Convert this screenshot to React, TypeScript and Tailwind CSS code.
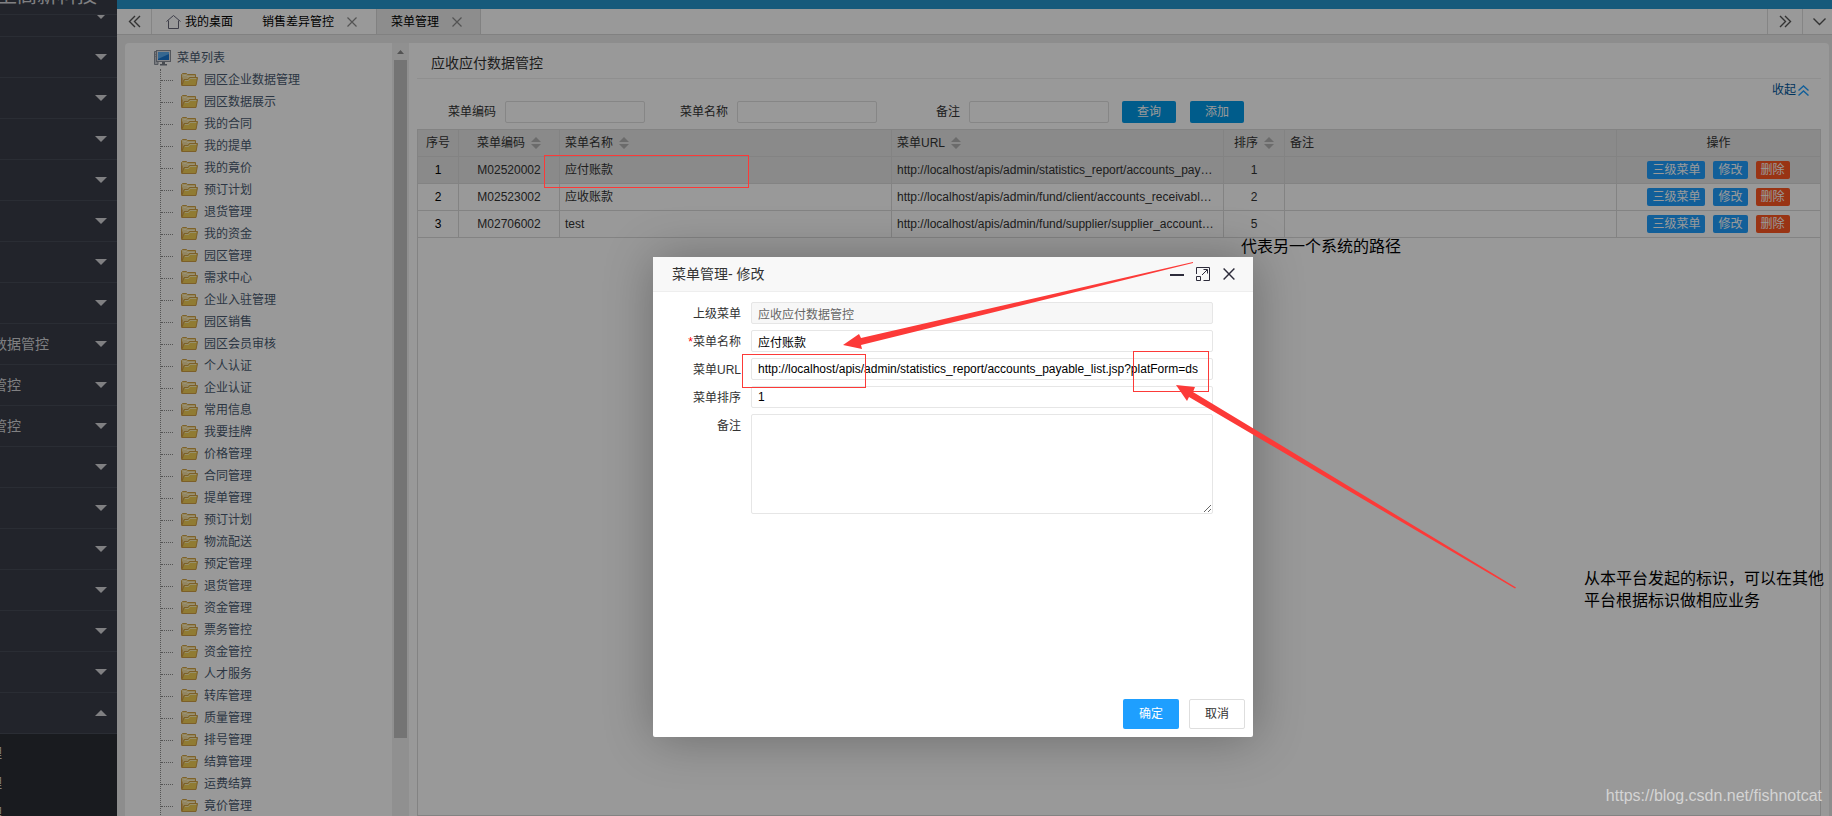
import type { ReactNode } from "react";

const NAV_LABELS = [
  "", "", "", "", "", "", "", "", "数据管控", "管控", "管控",
  "", "", "", "", "", "", "",
];

const TREE = [
  "园区企业数据管理", "园区数据展示", "我的合同", "我的提单", "我的竟价", "预订计划",
  "退货管理", "我的资金", "园区管理", "需求中心", "企业入驻管理", "园区销售",
  "园区会员审核", "个人认证", "企业认证", "常用信息", "我要挂牌", "价格管理",
  "合同管理", "提单管理", "预订计划", "物流配送", "预定管理", "退货管理",
  "资金管理", "票务管控", "资金管控", "人才服务", "转库管理", "质量管理",
  "排号管理", "结算管理", "运费结算", "竟价管理",
];

type Row = { code: string; name: string; url: string; sort: number };

const ROWS: Row[] = [
  { code: "M02520002", name: "应付账款", url: "http://localhost/apis/admin/statistics_report/accounts_payable_list.jsp", sort: 1 },
  { code: "M02523002", name: "应收账款", url: "http://localhost/apis/admin/fund/client/accounts_receivable_list.jsp", sort: 2 },
  { code: "M02706002", name: "test", url: "http://localhost/apis/admin/fund/supplier/supplier_account_list.jsp", sort: 5 },
];

function Caret({ up = false }: { up?: boolean }) {
  return (
    <svg width="12" height="6" viewBox="0 0 12 6" fill="#d5d6d9" className="shrink-0">
      <path d={up ? "M0 6L6 0L12 6Z" : "M0 0H12L6 6Z"} />
    </svg>
  );
}

function CloseIcon({ size, color }: { size: number; color: string }) {
  return (
    <svg width={size} height={size} viewBox="0 0 10 10" fill="none" stroke={color} strokeWidth="1.2">
      <path d="M0.5 0.5L9.5 9.5M9.5 0.5L0.5 9.5" />
    </svg>
  );
}

function Chevrons({ flip = false }: { flip?: boolean }) {
  return (
    <svg width="13" height="13" viewBox="0 0 13 13" fill="none" stroke="#555" strokeWidth="1.4">
      <path d={flip ? "M1 1L6.5 6.5L1 12M6 1L11.5 6.5L6 12" : "M7 1L1.5 6.5L7 12M12 1L6.5 6.5L12 12"} />
    </svg>
  );
}

function FolderIcon() {
  return (
    <svg width="17" height="14" viewBox="0 0 17 14" className="shrink-0">
      <path d="M0.5 12.5V1.5L1.5 0.5H5.5L6.5 1.5H14.5V5" fill="#f6dfa0" stroke="#d3a443" />
      <path d="M2.5 2.5H5L6 3.5H13.5" fill="none" stroke="#fff3c8" />
      <path d="M1 12.5L3 6.5H7L8.5 4.5H16.5L15 12.5Z" fill="#f0cd55" stroke="#cf9f45" />
      <path d="M4 7.5H7.6L9 5.5H15.3" fill="none" stroke="#fbeeb4" />
      <path d="M1 4.5V11" stroke="#c98c35" />
    </svg>
  );
}

function MonitorIcon() {
  return (
    <svg width="17" height="16" viewBox="0 0 17 16" className="shrink-0">
      <path d="M0.5 1.5H4V14.5H0.5Z" fill="#c9ccd2" stroke="#8b919b" />
      <path d="M1.5 4.5H3M1.5 6.5H3" stroke="#7c828c" />
      <rect x="2.5" y="0.5" width="14" height="11" fill="#dfe2e7" stroke="#8a8f99" />
      <rect x="4" y="2" width="11" height="8" fill="#1877d2" />
      <path d="M4 2H15V4L4 9Z" fill="#5aacf0" />
      <path d="M8 12H11V14H13V15.5H6V14H8Z" fill="#777d88" />
    </svg>
  );
}

function SortIcon() {
  return (
    <svg width="10" height="12" viewBox="0 0 10 12" fill="#b2b2b2" className="shrink-0">
      <path d="M0 5L5 0L10 5ZM0 7H10L5 12Z" />
    </svg>
  );
}

function Sidebar() {
  return (
    <aside className="isolate flex w-[117px] shrink-0 flex-col overflow-hidden bg-[#393d49] text-sm text-[#d5d6d9]">
      <div className="relative z-10 flex h-[15px] shrink-0 items-end justify-end border-b border-[#464b58] bg-[#393d49] pr-5">
        <h1 className="mb-1.5 whitespace-nowrap text-xl leading-6">上高新科技</h1>
      </div>
      <nav className="-mt-[19px] shrink-0">
        {NAV_LABELS.map((label, i) => (
          <a key={i} href="#" className="flex h-[41px] items-center justify-end border-b border-[#464b58] pr-2.5">
            <span className="-ml-[7px] flex-1 whitespace-nowrap">{label}</span>
            <Caret up={i === NAV_LABELS.length - 1} />
          </a>
        ))}
      </nav>
      <div className="flex-1 bg-[#2b2d35] pt-1">
        {[0, 1, 2].map((i) => (
          <a key={i} href="#" className="block h-[30px] leading-[30px]">
            <span className="-ml-3">理</span>
          </a>
        ))}
      </div>
    </aside>
  );
}

function TabBar() {
  return (
    <div className="flex h-[26px] shrink-0 border-b border-[#d8d8d8] bg-white text-xs text-black">
      <button aria-label="向左" className="flex w-[35px] items-center justify-center border-r border-[#dedede]">
        <Chevrons />
      </button>
      <button className="flex items-center gap-1 px-3.5">
        <svg width="15" height="14" viewBox="0 0 15 14" fill="none" stroke="#667" strokeWidth="1">
          <path d="M0.5 6.5L7.5 0.5L14.5 6.5M2.5 5.5V13.5H12.5V5.5" />
        </svg>
        我的桌面
      </button>
      <button className="flex items-center gap-[13px] px-[15px]">
        销售差异管控
        <CloseIcon size={10} color="#8a8a8a" />
      </button>
      <button className="ml-1 flex items-center gap-[13px] border-x border-[#d8d8d8] bg-[#ececec] pl-3.5 pr-[18px]">
        菜单管理
        <CloseIcon size={10} color="#8a8a8a" />
      </button>
      <div className="flex-1" />
      <button aria-label="向右" className="flex w-[35px] items-center justify-center border-l border-[#dedede]">
        <Chevrons flip />
      </button>
      <button aria-label="更多" className="flex w-[30px] items-center justify-end border-l border-[#dedede] pr-1.5">
        <svg width="13" height="8" viewBox="0 0 13 8" fill="none" stroke="#555" strokeWidth="1.4">
          <path d="M0.5 0.5L6.5 6.5L12.5 0.5" />
        </svg>
      </button>
    </div>
  );
}

function TreePanel() {
  return (
    <div className="flex w-[284px] shrink-0 rounded-tl-sm bg-white text-xs text-[#4a5b70]">
      <div className="flex-1 overflow-hidden pl-[29px] pt-1">
        <div className="flex h-[22px] items-center gap-1.5">
          <MonitorIcon />
          菜单列表
        </div>
        <ul className="ml-1.5 border-l border-dotted border-[#8c8c8c]">
          {TREE.map((name, i) => (
            <li key={i} className="flex h-[22px] items-center">
              <span className="mr-2 w-3 border-t border-dotted border-[#8c8c8c]" />
              <FolderIcon />
              <span className="ml-1.5">{name}</span>
            </li>
          ))}
        </ul>
      </div>
      <div className="flex w-[17px] flex-col items-center bg-[#f1f1f1]">
        <svg width="17" height="17" viewBox="0 0 17 17" fill="#8a8a8a" className="shrink-0">
          <path d="M5 11L8.5 7L12 11Z" />
        </svg>
        <div className="h-[678px] w-[13px] shrink-0 bg-[#c1c1c1]" />
      </div>
    </div>
  );
}

function SearchField({ id, label, className }: { id: string; label: string; className: string }) {
  return (
    <div className={`flex items-center gap-[9px] ${className}`}>
      <label htmlFor={id}>{label}</label>
      <input id={id} className="h-[22px] w-[140px] rounded-xs border border-[#e0e0e0] bg-white px-1" />
    </div>
  );
}

function Th({ children, sortable = false, center = false }: { children: ReactNode; sortable?: boolean; center?: boolean }) {
  return (
    <th className="border border-[#dadada] px-[5px] font-normal">
      <span className={`flex items-center gap-1.5 ${center ? "justify-center" : ""}`}>
        {children}
        {sortable && <SortIcon />}
      </span>
    </th>
  );
}

function MenuTable() {
  const td = "truncate border border-[#dadada] px-[5px]";
  const btn = "h-[18px] rounded-xs px-[5px] leading-[18px] text-white";
  return (
    <table className="w-full table-fixed border-collapse text-[#333]">
      <colgroup>
        <col className="w-[41px]" />
        <col className="w-[101px]" />
        <col />
        <col />
        <col className="w-[61px]" />
        <col />
        <col className="w-[204px]" />
      </colgroup>
      <thead>
        <tr className="h-[27px] bg-[#e6e6e6]">
          <Th center>序号</Th>
          <Th sortable center>菜单编码</Th>
          <Th sortable>菜单名称</Th>
          <Th sortable>菜单URL</Th>
          <Th sortable center>排序</Th>
          <Th>备注</Th>
          <Th center>操作</Th>
        </tr>
      </thead>
      <tbody>
        {ROWS.map((row, i) => (
          <tr key={row.code} className={`h-[27px] ${i === 0 ? "bg-[#e6e6e6]" : ""}`}>
            <td className={`${td} text-center text-black`}>{i + 1}</td>
            <td className={`${td} text-center`}>{row.code}</td>
            <td className={td}>{row.name}</td>
            <td className={td}>{row.url}</td>
            <td className={`${td} text-center`}>{row.sort}</td>
            <td className={td} />
            <td className={td}>
              <div className="flex justify-center gap-2">
                <button className={`${btn} bg-[#1e9fff]`}>三级菜单</button>
                <button className={`${btn} bg-[#1e9fff]`}>修改</button>
                <button className={`${btn} bg-[#ff5722]`}>删除</button>
              </div>
            </td>
          </tr>
        ))}
      </tbody>
    </table>
  );
}

function ContentPanel() {
  return (
    <div className="flex min-w-0 flex-1 flex-col rounded-tr-sm bg-white px-2 text-xs text-[#333]">
      <h2 className="h-9 shrink-0 border-b border-[#eee] pl-3.5 text-sm leading-10">应收应付数据管控</h2>
      <div className="flex h-[22px] shrink-0 items-center justify-end pr-3">
        <a href="#" className="flex items-center gap-0.5 text-[#01579b]">
          收起
          <svg width="11" height="11" viewBox="0 0 11 11" fill="none" stroke="#1e9fff" strokeWidth="1.4">
            <path d="M0.5 5.5L5.5 1L10.5 5.5M0.5 10.5L5.5 6L10.5 10.5" />
          </svg>
        </a>
      </div>
      <form className="flex h-7 shrink-0 items-start pl-[31px]" onSubmit={(e) => e.preventDefault()}>
        <SearchField id="q-code" label="菜单编码" className="" />
        <SearchField id="q-name" label="菜单名称" className="ml-[35px]" />
        <SearchField id="q-note" label="备注" className="ml-[59px]" />
        <button className="ml-[13px] h-[22px] w-[54px] rounded-xs bg-[#009ae8] text-white">查询</button>
        <button className="ml-3.5 h-[22px] w-[54px] rounded-xs bg-[#009ae8] text-white">添加</button>
      </form>
      <MenuTable />
      <div className="flex-1 border-x border-b border-[#dadada]" />
    </div>
  );
}

function FormRow({ id, label, required = false, children }: { id: string; label: string; required?: boolean; children: ReactNode }) {
  return (
    <div className="flex gap-2.5">
      <label htmlFor={id} className="w-[88px] pt-0.5 text-right leading-5">
        {required && <span className="text-[#f00]">*</span>}
        {label}
      </label>
      {children}
    </div>
  );
}

function EditDialog() {
  const input = "h-[22px] flex-1 rounded-xs border border-[#e6e6e6] px-1.5 text-black";
  return (
    <div
      role="dialog"
      aria-labelledby="dialog-title"
      className="absolute left-[653px] top-[257px] flex h-[480px] w-[600px] flex-col rounded-xs bg-white text-xs text-[#333] shadow-[1px_1px_50px_rgba(0,0,0,0.3)]"
    >
      <div className="flex h-[35px] shrink-0 items-center border-b border-[#eee] bg-[#f8f8f8] pl-[19px] pr-[18px]">
        <h3 id="dialog-title" className="flex-1 text-sm">菜单管理- 修改</h3>
        <div className="flex items-center gap-3">
          <button aria-label="最小化">
            <svg width="14" height="14" viewBox="0 0 14 14">
              <path d="M0 8H14" stroke="#2d2c3b" strokeWidth="2" />
            </svg>
          </button>
          <button aria-label="最大化">
            <svg width="14" height="14" viewBox="0 0 14 14" fill="none" stroke="#2d2c3b">
              <path d="M0.5 7V0.5H13.5V13.5H7.5M0.5 9.5H4.5V13.5H0.5ZM6 8L11 3M7.5 2.5H11.5V6.5" />
            </svg>
          </button>
          <button aria-label="关闭" className="pl-px">
            <CloseIcon size={12} color="#2d2c3b" />
          </button>
        </div>
      </div>
      <form className="flex flex-1 flex-col gap-1.5 pr-10 pt-2.5" onSubmit={(e) => e.preventDefault()}>
        <FormRow id="f-parent" label="上级菜单">
          <input id="f-parent" disabled defaultValue="应收应付数据管控" className="h-[22px] flex-1 rounded-xs border border-[#e6e6e6] bg-[#f7f7f7] px-1.5 text-[#666]" />
        </FormRow>
        <FormRow id="f-name" label="菜单名称" required>
          <input id="f-name" defaultValue="应付账款" className={input} />
        </FormRow>
        <FormRow id="f-url" label="菜单URL">
          <input
            id="f-url"
            defaultValue="http://localhost/apis/admin/statistics_report/accounts_payable_list.jsp?platForm=ds"
            className={input}
          />
        </FormRow>
        <FormRow id="f-sort" label="菜单排序">
          <input id="f-sort" defaultValue="1" className={input} />
        </FormRow>
        <FormRow id="f-note" label="备注">
          <textarea id="f-note" className="h-[100px] flex-1 resize rounded-xs border border-[#e6e6e6] px-1.5" />
        </FormRow>
      </form>
      <div className="flex justify-end gap-2.5 p-2">
        <button className="h-[30px] w-14 rounded-xs bg-[#1e9fff] text-white">确定</button>
        <button className="h-[30px] w-14 rounded-xs border border-[#dedede] bg-white">取消</button>
      </div>
    </div>
  );
}

// Red boxes, arrows and notes drawn over the whole page
function Annotations() {
  return (
    <div className="pointer-events-none absolute inset-0 text-base leading-[22px] text-black">
      <svg width="1832" height="816" viewBox="0 0 1832 816" className="absolute left-0 top-0">
        <g fill="none" stroke="#fc3a38">
          <rect x="544.5" y="155.5" width="204" height="32" />
          <rect x="742.5" y="354.5" width="123" height="33" />
          <rect x="1133.5" y="351.5" width="75" height="40" />
        </g>
        <g fill="#fc3a38">
          <path d="M843 345L859 334L861 338L1193 262L1193 263L861 345L862 349Z" />
          <path d="M1176 385L1195 387L1193 392L1516 587.5L1515 588.5L1189 397L1187 401Z" />
        </g>
      </svg>
      <p className="absolute left-[1241px] top-[236px] whitespace-nowrap">代表另一个系统的路径</p>
      <p className="absolute left-[1584px] top-[568px] whitespace-nowrap">
        从本平台发起的标识，可以在其他
        <br />
        平台根据标识做相应业务
      </p>
      <p className="absolute bottom-[9px] right-[10px] text-[#d4d4d4]">
        https://blog.csdn.net/fishnotcat
      </p>
    </div>
  );
}

export default function App() {
  return (
    <div className="relative flex h-screen overflow-hidden font-['Liberation_Sans','Noto_Sans_CJK_SC',sans-serif]">
      <Sidebar />
      <div className="flex min-w-0 flex-1 flex-col bg-[#ececec]">
        <div className="h-[9px] shrink-0 bg-[#2696cd]" />
        <TabBar />
        <div className="flex min-h-0 flex-1 pl-2 pr-[3px] pt-2">
          <TreePanel />
          <ContentPanel />
        </div>
      </div>
      <div className="absolute inset-0 bg-black/40" />
      <EditDialog />
      <Annotations />
    </div>
  );
}
